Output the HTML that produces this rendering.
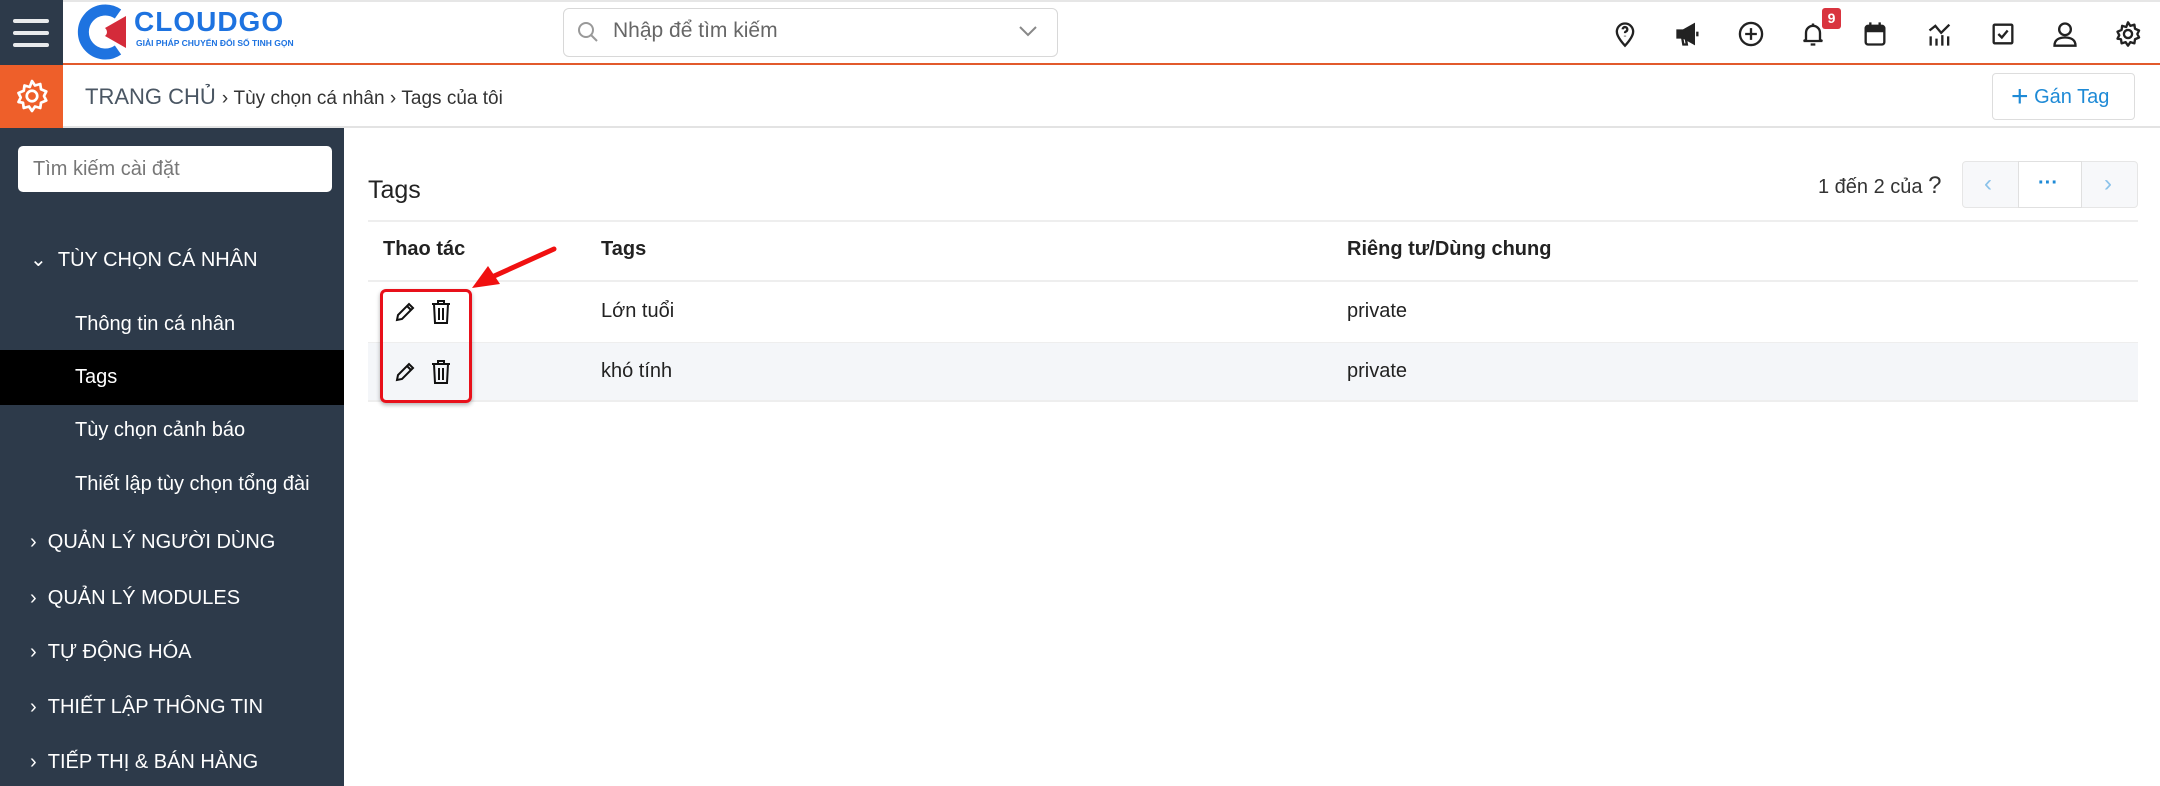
<!DOCTYPE html>
<html><head><meta charset="utf-8">
<style>
*{box-sizing:border-box;margin:0;padding:0}
body{width:2160px;height:786px;overflow:hidden;background:#fff;font-family:"Liberation Sans","DejaVu Sans",sans-serif;color:#222;position:relative}
.abs{position:absolute}
.top{left:0;top:0;width:2160px;height:65px;border-top:2px solid #e6e6e6;border-bottom:2px solid #e25a2c;background:#fff}
.ham{left:0;top:0;width:63px;height:65px;background:#2d3a4a}
.ham i{position:absolute;left:13px;width:36px;height:4px;border-radius:2px;background:#e8eaec}
.bar2{left:0;top:65px;width:2160px;height:63px;border-bottom:2px solid #e3e3e3;background:#fff}
.gearbox{left:0;top:65px;width:63px;height:63px;background:#ee5f2a}
.side{left:0;top:128px;width:344px;height:658px;background:#2d3a4a;color:#fff}
.side .s{position:absolute;font-size:20px;white-space:nowrap}
.icon{position:absolute;top:20px;width:28px;height:28px}
td,th{font-size:20px}
</style></head><body>
<div class="abs top"></div>
<div class="abs ham"><i style="top:19px"></i><i style="top:31px"></i><i style="top:43px"></i></div>
<!-- logo -->
<svg class="abs" style="left:74px;top:4px" width="60" height="56" viewBox="0 0 60 56">
<path d="M44 10 A22 22 0 1 0 44 46" fill="none" stroke="#1e73e0" stroke-width="11"/>
<path d="M24 28 L52 12 L52 44 Z" fill="#d42b3a"/>
<circle cx="28" cy="28" r="5" fill="#fff"/>
</svg>
<div class="abs" style="left:134px;top:6px;font-size:28px;font-weight:bold;color:#1e73e0;letter-spacing:1px">CLOUDGO</div>
<div class="abs" style="left:136px;top:38px;font-size:8.5px;font-weight:bold;color:#1e73e0">GIẢI PHÁP CHUYỂN ĐỔI SỐ TINH GỌN</div>
<!-- search -->
<div class="abs" style="left:563px;top:8px;width:495px;height:49px;border:1px solid #d8d8d8;border-radius:6px"></div>
<svg class="abs" style="left:576px;top:20px" width="24" height="24" viewBox="0 0 24 24"><circle cx="10" cy="10" r="7" fill="none" stroke="#999" stroke-width="2"/><path d="M15 15l6 6" stroke="#999" stroke-width="2"/></svg>
<div class="abs" style="left:613px;top:19px;font-size:21px;color:#666">Nhập để tìm kiếm</div>
<svg class="abs" style="left:1018px;top:24px" width="20" height="14" viewBox="0 0 20 14"><path d="M2 3l8 8 8-8" fill="none" stroke="#888" stroke-width="2"/></svg>
<!-- top icons -->
<svg class="icon" style="left:1611px" viewBox="0 0 24 24" fill="none" stroke="#222" stroke-width="2"><path d="M12 22s-7-7-7-12a7 7 0 0 1 14 0c0 5-7 12-7 12z"/><path d="M10 8a2 2 0 1 1 2.5 2c-.5.3-.5.8-.5 1.3M12 13.5v.5"/></svg>
<svg class="icon" style="left:1674px" viewBox="0 0 24 24" fill="none" stroke="#222" stroke-width="2"><path d="M3 9h5l9-5v16l-9-5H3z" fill="#222"/><path d="M7 15l1 6h3l-1-6"/><path d="M20 10v4"/></svg>
<svg class="icon" style="left:1737px" viewBox="0 0 24 24" fill="none" stroke="#222" stroke-width="2"><circle cx="12" cy="12" r="9.5"/><path d="M12 7v10M7 12h10"/></svg>
<svg class="icon" style="left:1799px" viewBox="0 0 24 24" fill="none" stroke="#222" stroke-width="2"><path d="M6 17V11a6 6 0 0 1 12 0v6l2 1H4z"/><path d="M10 21h4M12 3v2"/></svg>
<div class="abs" style="left:1822px;top:8px;width:19px;height:21px;background:#d9343f;border-radius:3px;color:#fff;font-size:14px;font-weight:bold;text-align:center;line-height:21px">9</div>
<svg class="icon" style="left:1861px" viewBox="0 0 24 24" fill="none" stroke="#222" stroke-width="2"><rect x="4" y="5" width="16" height="16" rx="2"/><path d="M4 8h16" stroke-width="5"/><path d="M8 2v4M16 2v4"/></svg>
<svg class="icon" style="left:1926px" viewBox="0 0 24 24" fill="none" stroke="#222" stroke-width="2"><path d="M4 22v-8M9 22v-6M14 22v-9M19 22v-8"/><path d="M3 9l5-4 5 6 7-7"/></svg>
<svg class="icon" style="left:1989px" viewBox="0 0 24 24" fill="none" stroke="#222" stroke-width="2"><rect x="4" y="4" width="16" height="16" rx="1"/><path d="M8 12l3 3 5-6"/></svg>
<svg class="icon" style="left:2051px" viewBox="0 0 24 24" fill="none" stroke="#222" stroke-width="2"><circle cx="12" cy="8" r="5"/><path d="M3 22c0-5 4-7 9-7s9 2 9 7z"/></svg>
<svg class="icon" style="left:2114px" viewBox="0 0 24 24" fill="none" stroke="#222" stroke-width="2"><circle cx="12" cy="12" r="3.5"/><path d="M12 2l2 3 3.5-1 .5 3.5 3.5 1.5-1.5 3 1.5 3-3.5 1.5-.5 3.5-3.5-1-2 3-2-3-3.5 1-.5-3.5L3 16l1.5-3L3 10l3.5-1.5.5-3.5 3.5 1z" stroke-linejoin="round"/></svg>
<!-- bar 2 -->
<div class="abs bar2"></div>
<div class="abs gearbox"></div>
<svg class="abs" style="left:14px;top:78px" width="36" height="36" viewBox="0 0 24 24" fill="none" stroke="#fff" stroke-width="1.8"><circle cx="12" cy="12" r="3.5"/><path d="M12 2l2 3 3.5-1 .5 3.5 3.5 1.5-1.5 3 1.5 3-3.5 1.5-.5 3.5-3.5-1-2 3-2-3-3.5 1-.5-3.5L3 16l1.5-3L3 10l3.5-1.5.5-3.5 3.5 1z" stroke-linejoin="round"/></svg>
<div class="abs" style="left:85px;top:84px;font-size:22px;color:#4a5663;white-space:nowrap">TRANG CHỦ <span style="font-size:19px;color:#333">›&nbsp;Tùy chọn cá nhân&nbsp;›&nbsp;Tags của tôi</span></div>
<div class="abs" style="left:1992px;top:73px;width:143px;height:47px;border:1px solid #ddd;border-radius:4px;color:#1e8ad6;font-size:20px;line-height:45px;padding-left:18px"><span style="font-size:30px;vertical-align:-3px">+</span>&nbsp;Gán Tag</div>
<!-- sidebar -->
<div class="abs side">
<div style="position:absolute;left:18px;top:18px;width:314px;height:46px;background:#fff;border-radius:5px;color:#777;font-size:20px;line-height:46px;padding-left:15px">Tìm kiếm cài đặt</div>
<div class="s" style="left:30px;top:119px">⌄&nbsp;&nbsp;TÙY CHỌN CÁ NHÂN</div>
<div class="s" style="left:75px;top:185px">Thông tin cá nhân</div>
<div style="position:absolute;left:0;top:222px;width:344px;height:55px;background:#000"></div>
<div class="s" style="left:75px;top:238px">Tags</div>
<div class="s" style="left:75px;top:291px">Tùy chọn cảnh báo</div>
<div class="s" style="left:75px;top:345px">Thiết lập tùy chọn tổng đài</div>
<div class="s" style="left:30px;top:403px">›&nbsp;&nbsp;QUẢN LÝ NGƯỜI DÙNG</div>
<div class="s" style="left:30px;top:459px">›&nbsp;&nbsp;QUẢN LÝ MODULES</div>
<div class="s" style="left:30px;top:513px">›&nbsp;&nbsp;TỰ ĐỘNG HÓA</div>
<div class="s" style="left:30px;top:568px">›&nbsp;&nbsp;THIẾT LẬP THÔNG TIN</div>
<div class="s" style="left:30px;top:623px">›&nbsp;&nbsp;TIẾP THỊ &amp; BÁN HÀNG</div>
</div>
<!-- main -->
<div class="abs" style="left:368px;top:176px;font-size:25px;color:#222">Tags</div>
<div class="abs" style="left:1818px;top:172px;font-size:20px;color:#333">1 đến 2 của <span style="font-size:24px">?</span></div>
<div class="abs" style="left:1962px;top:161px;width:176px;height:47px;border:1px solid #e6e6e6;border-radius:4px;background:#f7f8fa"></div>
<div class="abs" style="left:2018px;top:161px;width:64px;height:47px;background:#fff;border:1px solid #e0e0e0"></div>
<div class="abs" style="left:1984px;top:170px;font-size:24px;color:#8cc3ea">‹</div>
<div class="abs" style="left:2038px;top:172px;font-size:20px;color:#1e8ad6;font-weight:bold">···</div>
<div class="abs" style="left:2104px;top:170px;font-size:24px;color:#8cc3ea">›</div>
<div class="abs" style="left:368px;top:220px;width:1770px;height:2px;background:#eee"></div>
<div class="abs" style="left:383px;top:238px;font-size:20px;font-weight:bold;color:#222">Thao tác</div>
<div class="abs" style="left:601px;top:238px;font-size:20px;font-weight:bold;color:#222">Tags</div>
<div class="abs" style="left:1347px;top:238px;font-size:20px;font-weight:bold;color:#222">Riêng tư/Dùng chung</div>
<div class="abs" style="left:368px;top:280px;width:1770px;height:2px;background:#eee"></div>
<div class="abs" style="left:368px;top:342px;width:1770px;height:60px;background:#f4f6f9;border-top:1px solid #eee;border-bottom:2px solid #eee"></div>
<div class="abs" style="left:601px;top:300px;font-size:20px">Lớn tuổi</div>
<div class="abs" style="left:1347px;top:300px;font-size:20px">private</div>
<div class="abs" style="left:601px;top:360px;font-size:20px">khó tính</div>
<div class="abs" style="left:1347px;top:360px;font-size:20px">private</div>
<!-- action icons -->
<svg class="abs" style="left:393px;top:300px" width="24" height="24" viewBox="0 0 24 24" fill="none" stroke="#111" stroke-width="2"><path d="M4 20l1-5L16 4l4 4L9 19z"/><path d="M14 6l4 4" /></svg>
<svg class="abs" style="left:430px;top:299px" width="22" height="26" viewBox="0 0 22 26" fill="none" stroke="#111" stroke-width="2"><path d="M2 5h18M8 5V2h6v3M4 5l1 19h12l1-19M9 9v12M13 9v12"/></svg>
<svg class="abs" style="left:393px;top:360px" width="24" height="24" viewBox="0 0 24 24" fill="none" stroke="#111" stroke-width="2"><path d="M4 20l1-5L16 4l4 4L9 19z"/><path d="M14 6l4 4" /></svg>
<svg class="abs" style="left:430px;top:359px" width="22" height="26" viewBox="0 0 22 26" fill="none" stroke="#111" stroke-width="2"><path d="M2 5h18M8 5V2h6v3M4 5l1 19h12l1-19M9 9v12M13 9v12"/></svg>
<div class="abs" style="left:380px;top:289px;width:92px;height:114px;border:3px solid #e8101a;border-radius:6px;box-shadow:0 2px 4px rgba(0,0,0,.3)"></div>
<svg class="abs" style="left:470px;top:244px" width="90" height="50" viewBox="0 0 90 50"><path d="M84 5 L22 33" stroke="#f01010" stroke-width="5" stroke-linecap="round"/><path d="M2 44 L18 22 L30 40 Z" fill="#f01010"/></svg>
</body></html>
